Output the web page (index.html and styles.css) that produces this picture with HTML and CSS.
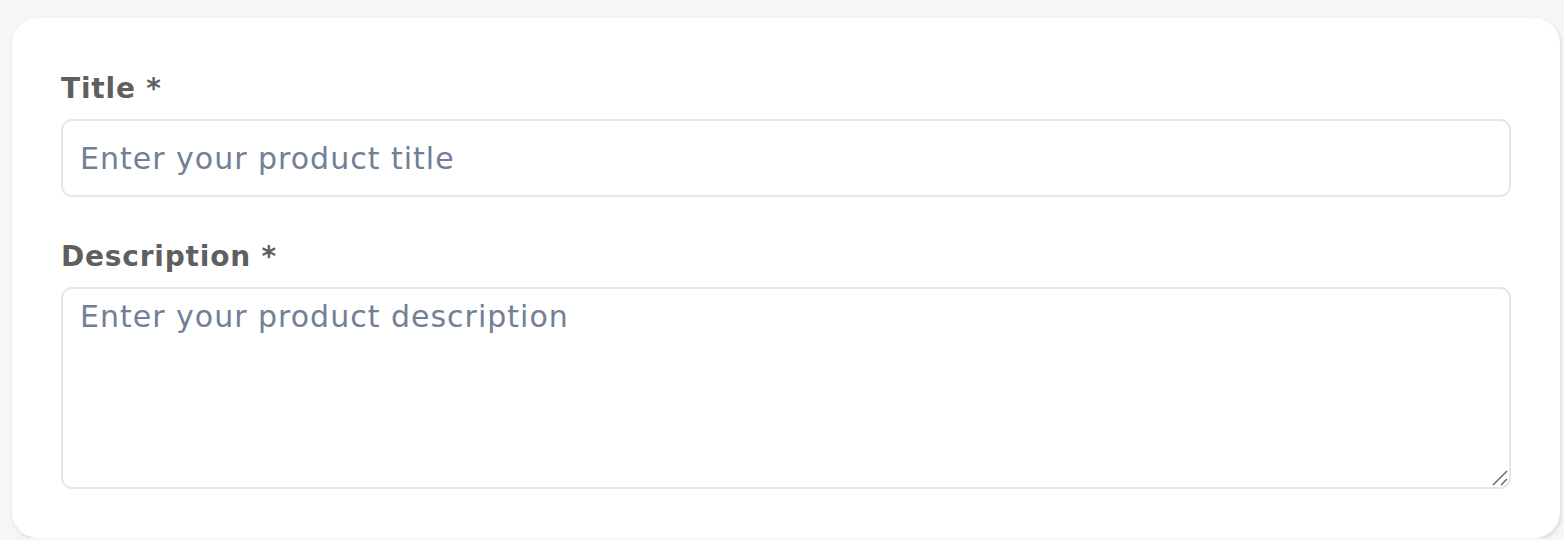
FILE: index.html
```html
<!DOCTYPE html>
<html>
<head>
<meta charset="utf-8">
<link rel="stylesheet" href="styles.css">
</head>
<body>
<div class="card">
  <div class="field">
    <label class="label" for="title">Title *</label>
    <input class="input" id="title" type="text" placeholder="Enter your product title">
  </div>
  <div class="field">
    <label class="label" for="desc">Description *</label>
    <div class="area-wrap">
      <textarea class="textarea" id="desc" placeholder="Enter your product description"></textarea>
      <svg class="resizer" width="16" height="16" viewBox="0 0 16 16" aria-hidden="true">
        <line x1="1" y1="15" x2="15" y2="1" stroke="#5a5a5a" stroke-width="1.3"/>
        <line x1="9" y1="15" x2="15" y2="9" stroke="#5a5a5a" stroke-width="1.3"/>
      </svg>
    </div>
  </div>
</div>
</body>
</html>
```
FILE: styles.css
```css
html, body {
  margin: 0;
  padding: 0;
  background: #f6f6f6;
}
body {
  font-family: "DejaVu Sans", "Noto Sans", sans-serif;
}
.card {
  box-sizing: border-box;
  margin: 18px 4px 0 12px;
  width: 1548px;
  height: 520px;
  background: #ffffff;
  border-radius: 26px;
  box-shadow: 1px 2px 4px rgba(0, 0, 0, 0.12);
  padding: 51px 49px 48px;
  display: flex;
  flex-direction: column;
  gap: 40px;
}
.field {
  display: flex;
  flex-direction: column;
}
.label {
  font-size: 28px;
  font-weight: 700;
  letter-spacing: 0.8px;
  color: #5f5f5f;
  line-height: 40px;
  margin-bottom: 10px;
}
.input, .textarea {
  box-sizing: border-box;
  width: 100%;
  border: 2px solid #e4e7ee;
  border-radius: 11px;
  font-family: inherit;
  font-size: 30px;
  letter-spacing: 1px;
  color: #333;
  background: #fff;
  outline: none;
  display: block;
}
.input {
  height: 78px;
  padding: 0 17px;
}
.area-wrap {
  position: relative;
}
.textarea {
  height: 202px;
  padding: 10px 17px;
  resize: none;
}
.resizer {
  position: absolute;
  right: 3px;
  bottom: 3px;
}
.input::placeholder, .textarea::placeholder {
  color: #718096;
  opacity: 1;
}
```
